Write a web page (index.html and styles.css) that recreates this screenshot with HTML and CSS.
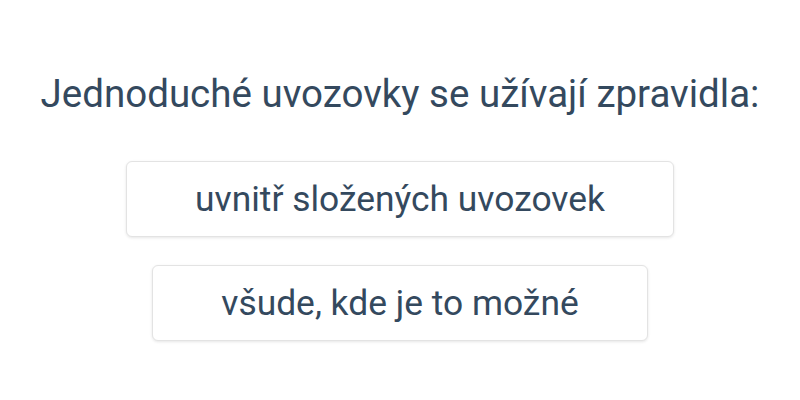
FILE: index.html
```html
<!DOCTYPE html>
<html>
  <head>
    <title>Uvozovky</title>
    <link rel="stylesheet" href="styles.css">
  </head>
  <body>
    <div class="quiz">
      <h2 class="question">Jednoduché uvozovky se užívají zpravidla:</h2>
      <div class="answers">
        <button class="answer">uvnitř složených uvozovek</button>
        <button class="answer">všude, kde je to možné</button>
      </div>
    </div>
  </body>
</html>
```

FILE: styles.css
```css
body {
  margin: 0;
  height: 100vh;
  background-color: #fff;
  font-family: Roboto, "Liberation Sans", sans-serif;
  color: #34495e;
}

.quiz {
  display: flex;
  flex-direction: column;
  align-items: center;
  padding-top: 72px;
}

.question {
  margin: 0;
  font-size: 38.5px;
  font-weight: 400;
  line-height: 44px;
}

.answers {
  display: flex;
  flex-direction: column;
  align-items: center;
  gap: 28px;
  margin-top: 45px;
}

.answer {
  padding: 0 68px;
  height: 76px;
  font-family: inherit;
  font-size: 35.4px;
  color: #34495e;
  background-color: #fff;
  border: 1px solid #e3e3e3;
  border-radius: 6px;
  box-shadow: 0 1px 3px rgba(0, 0, 0, 0.1);
  cursor: pointer;
}
```
